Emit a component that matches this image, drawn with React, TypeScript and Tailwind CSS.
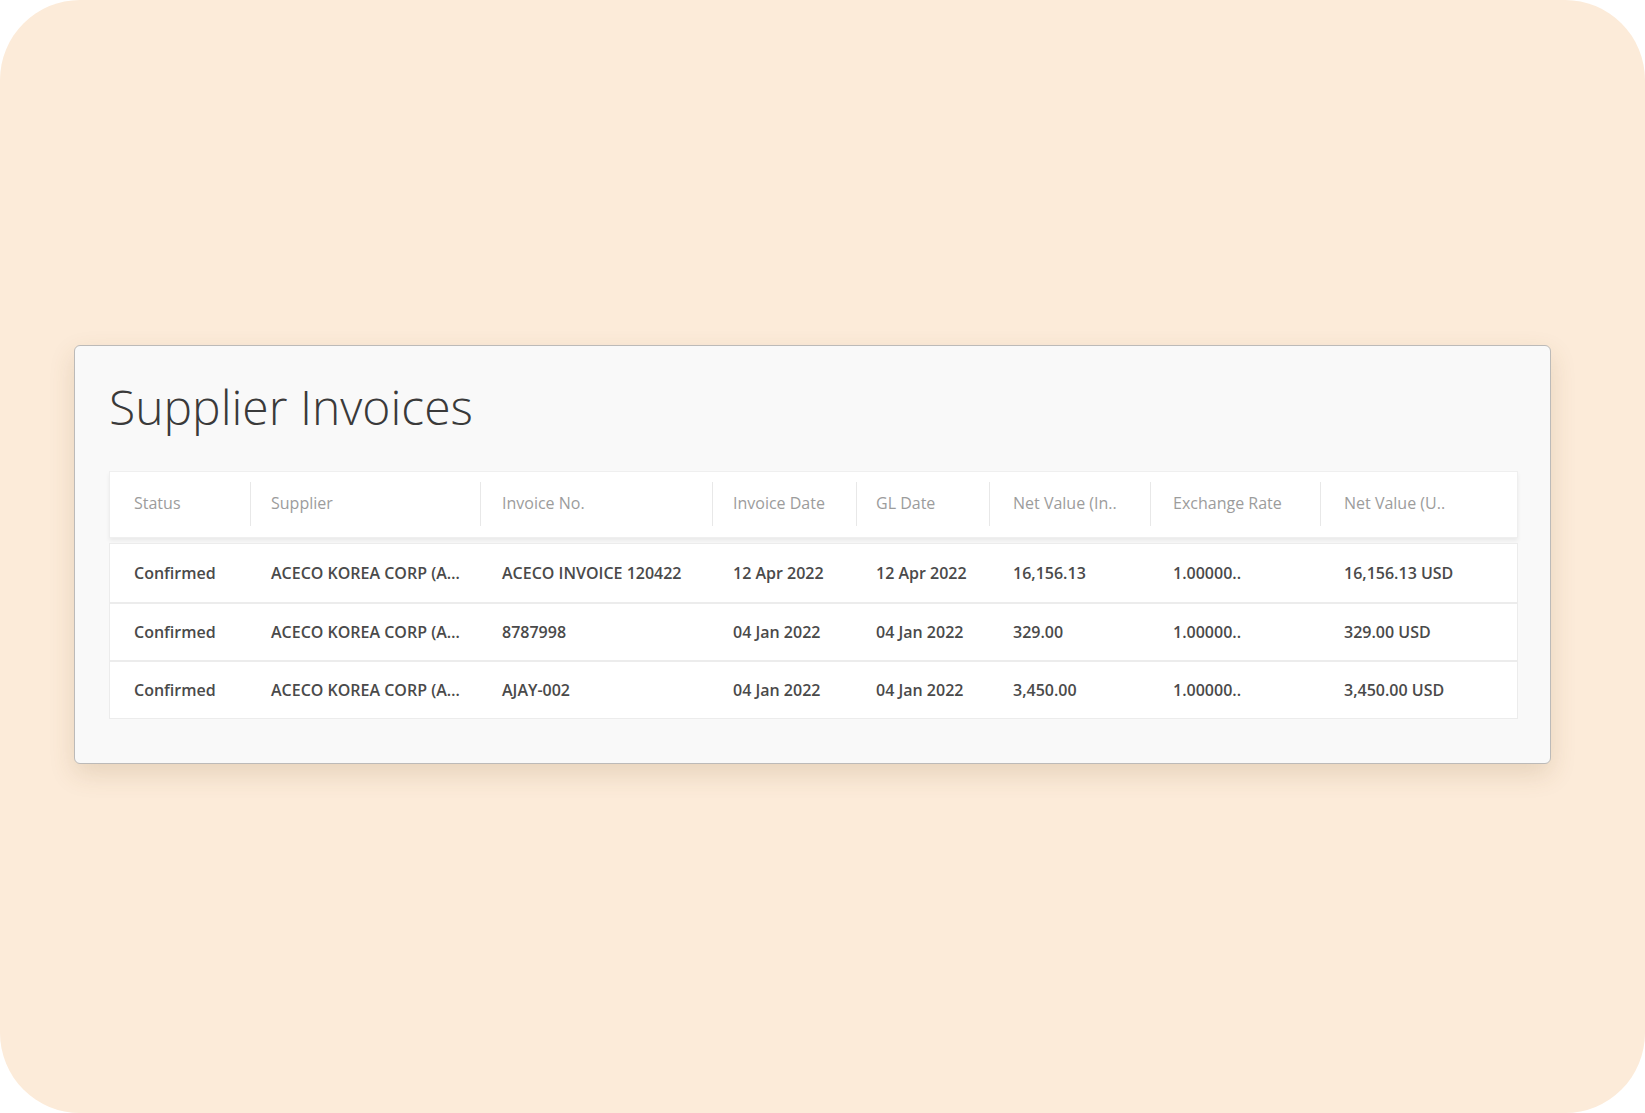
import React from "react";

const cols = [
  "Status",
  "Supplier",
  "Invoice No.",
  "Invoice Date",
  "GL Date",
  "Net Value (In..",
  "Exchange Rate",
  "Net Value (U..",
];

const rows = [
  ["Confirmed", "ACECO KOREA CORP (A\u2026", "ACECO INVOICE 120422", "12 Apr 2022", "12 Apr 2022", "16,156.13", "1.00000..", "16,156.13 USD"],
  ["Confirmed", "ACECO KOREA CORP (A\u2026", "8787998", "04 Jan 2022", "04 Jan 2022", "329.00", "1.00000..", "329.00 USD"],
  ["Confirmed", "ACECO KOREA CORP (A\u2026", "AJAY-002", "04 Jan 2022", "04 Jan 2022", "3,450.00", "1.00000..", "3,450.00 USD"],
];

const pads = [
  "pl-[24px]",
  "pl-[21px]",
  "pl-[22px]",
  "pl-[21px]",
  "pl-[20px]",
  "pl-[24px]",
  "pl-[23px]",
  "pl-[24px]",
];

const grid = "grid grid-cols-[140px_230px_232px_144px_133px_161px_170px_1fr]";

export default function App() {
  return (
    <div className="w-[1645px] h-[1113px] bg-white" style={{ fontFamily: "'Open Sans', 'Noto Sans', sans-serif" }}>
      <div className="w-full h-full rounded-[80px] bg-[#fcebd9] pt-[345px] pl-[74px]">
        <div className="w-[1477px] rounded-[6px] border border-[#bcbab8] bg-[#f9f9f9] pl-[34px] pr-[32px] pt-[28px] pb-[44px] shadow-[0_10px_26px_rgba(120,85,40,0.16)]">
          <h1 className="text-[48px] leading-[66px] font-light text-[#3a3a3a]">Supplier Invoices</h1>
          <div className="mt-[31px]">
            <div className={`${grid} h-[67px] pb-[3px] bg-white border border-[#efefef] shadow-[0_3px_4px_rgba(0,0,0,0.06)]`}>
              {cols.map((c, i) => (
                <div key={c} className={`relative flex items-center ${pads[i]} text-[16px] text-[#9c9c9c]`}>
                  {i > 0 && <span className="absolute left-0 top-[10px] bottom-[8px] w-px bg-[#e8e8e8]" />}
                  <span className="whitespace-nowrap">{c}</span>
                </div>
              ))}
            </div>
            <div className="mt-[5px] bg-white border border-[#ececec]">
              {rows.map((r, ri) => (
                <div key={ri} className={`${grid} h-[58px] ${ri > 0 ? "border-t-2 border-[#ececec]" : ""}`}>
                  {r.map((v, i) => (
                    <div key={i} className={`flex items-center ${pads[i]} text-[16px] font-semibold text-[#4a4a4a] whitespace-nowrap`}>
                      {v}
                    </div>
                  ))}
                </div>
              ))}
            </div>
          </div>
        </div>
      </div>
    </div>
  );
}
